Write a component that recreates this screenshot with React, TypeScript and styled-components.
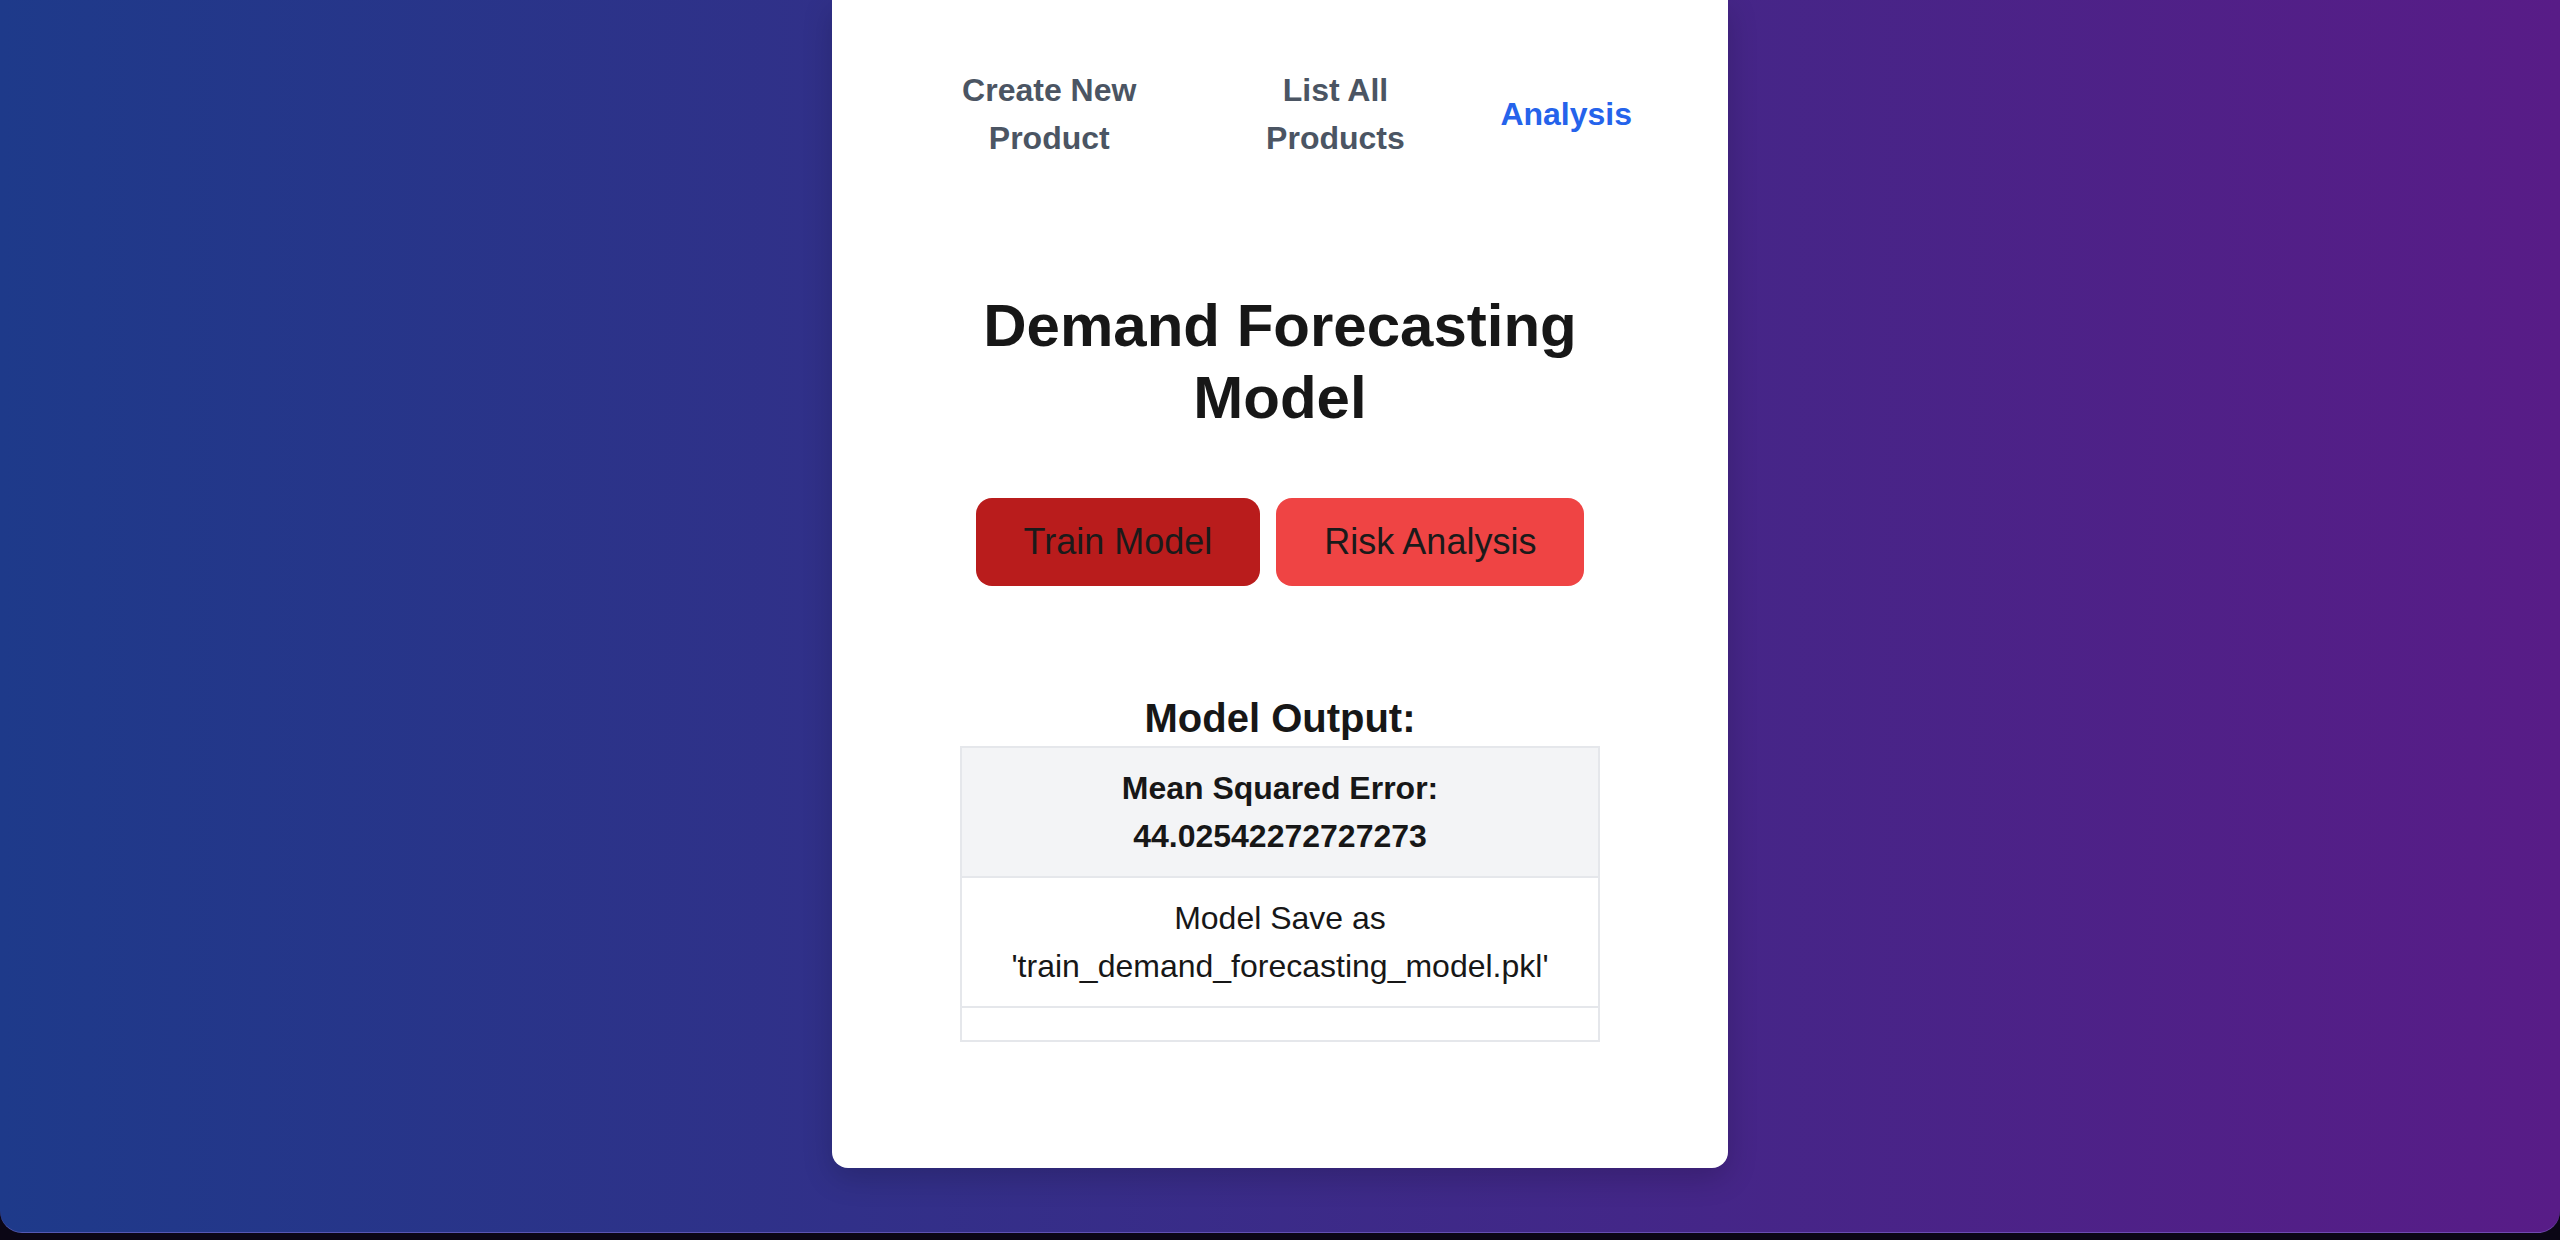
import React from 'react'
import styled, { createGlobalStyle } from 'styled-components'

const GlobalStyle = createGlobalStyle`
  html, body {
    margin: 0;
    padding: 0;
    background: #0b0615;
    font-family: "Liberation Sans", Arial, sans-serif;
  }
  * { box-sizing: border-box; }
`

const Screen = styled.div`
  height: 1233px;
  background: linear-gradient(to right, #1e3a8a, #581c87);
  border-radius: 0 0 22px 22px;
  border-bottom: 1px solid rgba(140, 120, 220, 0.5);
  display: flex;
  justify-content: center;
  align-items: flex-start;
`

const Card = styled.div`
  width: 896px;
  background: #ffffff;
  border-radius: 0 0 16px 16px;
  box-shadow: 0 10px 30px rgba(0, 0, 0, 0.18);
  padding: 66px 64px 126px;
  display: flex;
  flex-direction: column;
  align-items: center;
`

const Nav = styled.nav`
  width: 100%;
  display: flex;
  align-items: center;
`

const NavItem = styled.a<{ $active?: boolean }>`
  padding: 0 32px;
  text-align: center;
  font-size: 32px;
  line-height: 48px;
  font-weight: 700;
  color: ${p => (p.$active ? '#2563eb' : '#4b5563')};
  text-decoration: none;
  cursor: pointer;
`

const Content = styled.section`
  width: 640px;
  display: flex;
  flex-direction: column;
  align-items: center;
`

const Title = styled.h1`
  margin: 128px 0 0;
  font-size: 60px;
  line-height: 72px;
  font-weight: 700;
  text-align: center;
  color: #171717;
`

const Actions = styled.div`
  margin-top: 64px;
  display: flex;
  gap: 16px;
`

const ActionButton = styled.button<{ $tone: 'dark' | 'light' }>`
  border: none;
  border-radius: 16px;
  padding: 16px 48px;
  font-family: inherit;
  font-size: 36px;
  line-height: 56px;
  color: #1a1a1a;
  background: ${p => (p.$tone === 'dark' ? '#b91c1c' : '#ef4444')};
  cursor: pointer;
`

const OutputHeading = styled.h2`
  margin: 104px 0 0;
  font-size: 40px;
  line-height: 56px;
  font-weight: 700;
  color: #171717;
`

const OutputTable = styled.table`
  width: 640px;
  border-collapse: collapse;
`

const HeadCell = styled.th`
  border: 2px solid #e5e7eb;
  background: #f3f4f6;
  padding: 16px 32px;
  font-size: 32px;
  line-height: 48px;
  font-weight: 700;
  color: #171717;
  text-align: center;
`

const BodyCell = styled.td`
  border: 2px solid #e5e7eb;
  padding: 16px 32px;
  font-size: 32px;
  line-height: 48px;
  color: #171717;
  text-align: center;
`

export default function App() {
  return (
    <>
      <GlobalStyle />
      <Screen>
        <Card>
          <Nav>
            <NavItem>Create New Product</NavItem>
            <NavItem>List All Products</NavItem>
            <NavItem $active>Analysis</NavItem>
          </Nav>
          <Content>
            <Title>Demand Forecasting Model</Title>
            <Actions>
              <ActionButton $tone="dark">Train Model</ActionButton>
              <ActionButton $tone="light">Risk Analysis</ActionButton>
            </Actions>
            <OutputHeading>Model Output:</OutputHeading>
            <OutputTable>
              <thead>
                <tr>
                  <HeadCell>Mean Squared Error: 44.02542272727273</HeadCell>
                </tr>
              </thead>
              <tbody>
                <tr>
                  <BodyCell>Model Save as 'train_demand_forecasting_model.pkl'</BodyCell>
                </tr>
                <tr>
                  <BodyCell />
                </tr>
              </tbody>
            </OutputTable>
          </Content>
        </Card>
      </Screen>
    </>
  )
}
